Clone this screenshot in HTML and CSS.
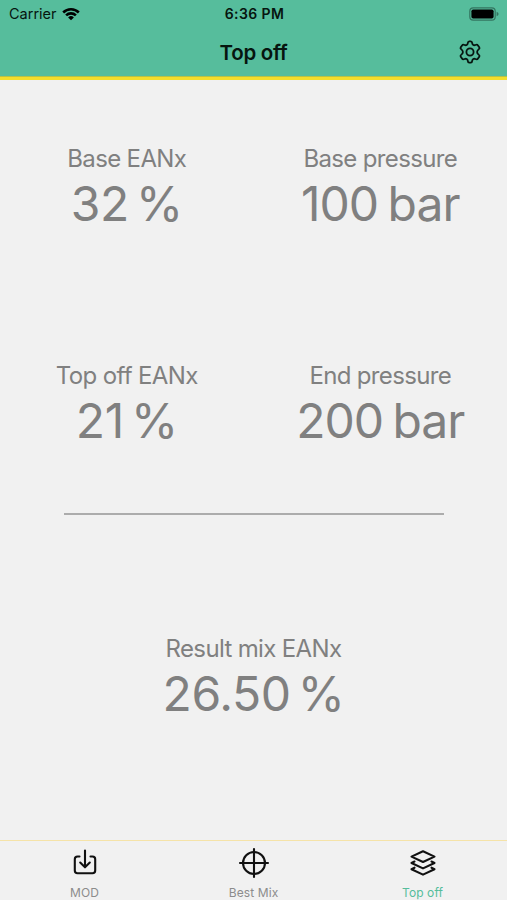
FILE: index.html
```html
<!DOCTYPE html>
<html lang="en">
<head>
    <meta charset="UTF-8">
    <meta name="viewport" content="width=device-width, initial-scale=1.0">
    <title>Top off</title>
    <link rel="stylesheet" href="styles.css">
</head>
<body>

    <header>
        <div class="status-bar">
            <div class="carrier">
                <span>Carrier</span>
                <svg class="wifi" viewBox="0 0 18 14">
                    <path d="M0.3 4.6 A12.3 12.3 0 0 1 17.7 4.6 L15.9 6.4 A9.8 9.8 0 0 0 2.1 6.4 Z"/>
                    <path d="M3.2 7.5 A8.2 8.2 0 0 1 14.8 7.5 L13 9.3 A5.7 5.7 0 0 0 5 9.3 Z"/>
                    <path d="M6.1 10.4 A4.1 4.1 0 0 1 11.9 10.4 L9 13.3 Z"/>
                </svg>
            </div>
            <span class="time">6:36 PM</span>
            <svg class="battery" viewBox="0 0 31 14">
                <rect class="battery-case" x="0.8" y="0.8" width="25.4" height="12.4" rx="3.4"/>
                <rect x="2.4" y="2.4" width="22.2" height="9.2" rx="1.8"/>
                <path class="battery-tip" d="M27.6 4.8 Q29.6 5.5 29.6 7 Q29.6 8.5 27.6 9.2 Z"/>
            </svg>
        </div>
        <div class="title-bar">
            <h1>Top off</h1>
            <svg class="settings" viewBox="0 0 24 24">
                <circle cx="12" cy="12" r="3.6"/>
                <path d="M9.8 3.2 Q10 1.3 11.2 1.3 H12.8 Q14 1.3 14.2 3.2 C14.4 5 15.8 5.7 17.4 5 Q19.2 4.2 19.8 5.2 L21.4 7.4 Q22 8.4 20.4 9.6 C18.7 11 18.7 13 20.4 14.4 Q22 15.6 21.4 16.6 L19.8 18.8 Q19.2 19.8 17.4 19 C15.8 18.3 14.4 19 14.2 20.8 Q14 22.7 12.8 22.7 H11.2 Q10 22.7 9.8 20.8 C9.6 19 8.2 18.3 6.6 19 Q4.8 19.8 4.2 18.8 L2.6 16.6 Q2 15.6 3.6 14.4 C5.3 13 5.3 11 3.6 9.6 Q2 8.4 2.6 7.4 L4.2 5.2 Q4.8 4.2 6.6 5 C8.2 5.7 9.6 5 9.8 3.2 Z"/>
            </svg>
        </div>
    </header>

    <main>
        <div class="inputs">
            <div class="field">
                <div class="label">Base EANx</div>
                <div class="value percent">32 %</div>
            </div>
            <div class="field">
                <div class="label">Base pressure</div>
                <div class="value">100 bar</div>
            </div>
            <div class="field">
                <div class="label">Top off EANx</div>
                <div class="value percent">21 %</div>
            </div>
            <div class="field">
                <div class="label">End pressure</div>
                <div class="value">200 bar</div>
            </div>
        </div>
        <hr>
        <div class="field result">
            <div class="label">Result mix EANx</div>
            <div class="value percent">26.50 %</div>
        </div>
    </main>

    <nav>
        <a class="tab">
            <svg viewBox="0 0 32 32">
                <path d="M10.5 9.5 H8.5 Q5.8 9.5 5.8 12.2 V23.5 Q5.8 26.2 8.5 26.2 H23.5 Q26.2 26.2 26.2 23.5 V12.2 Q26.2 9.5 23.5 9.5 H21.5"/>
                <path d="M16 3.5 V20 M11.2 15.6 L16 20.3 L20.8 15.6"/>
            </svg>
            <span>MOD</span>
        </a>
        <a class="tab">
            <svg viewBox="0 0 32 32">
                <circle cx="16" cy="16" r="11"/>
                <path d="M16 2 V30 M2 16 H30"/>
            </svg>
            <span>Best Mix</span>
        </a>
        <a class="tab active">
            <svg viewBox="0 0 32 32">
                <path d="M16 4.2 L27.5 9.6 L16 15 L4.5 9.6 Z"/>
                <path d="M7.5 14.5 L4.5 16 L16 21.4 L27.5 16 L24.5 14.5"/>
                <path d="M7.5 20.7 L4.5 22.2 L16 27.6 L27.5 22.2 L24.5 20.7"/>
            </svg>
            <span>Top off</span>
        </a>
    </nav>

</body>
</html>
```
FILE: styles.css
```css
* {
    box-sizing: border-box;
}

body {
    font-family: 'Inter', sans-serif;
    margin: 0;
    height: 900px;
    display: flex;
    flex-direction: column;
    background-color: #f1f1f1;
    color: #808080;
}

header {
    height: 80px;
    background-color: #56bd9c;
    border-bottom: 3px solid #f3de2c;
    box-shadow: inset 0 -1px #b9c244;
    color: #06150f;
}

.status-bar {
    display: grid;
    grid-template-columns: 1fr auto 1fr;
    align-items: center;
    height: 27px;
    padding: 0 7px 0 9px;
}

.carrier {
    display: flex;
    align-items: center;
    gap: 5px;
    font-size: 14.5px;
}

.wifi {
    width: 18px;
    height: 14px;
    fill: #000;
}

.time {
    font-size: 14px;
    font-weight: 600;
    letter-spacing: 0.4px;
}

.battery {
    width: 31px;
    height: 14px;
    justify-self: end;
}

.battery-case {
    fill: none;
    stroke: #347560;
    stroke-width: 1.2;
}

.battery-tip {
    fill: #347560;
}

.title-bar {
    display: grid;
    grid-template-columns: 1fr auto 1fr;
    align-items: center;
    height: 50px;
    padding: 0 25px;
}

h1 {
    grid-column: 2;
    margin: 0;
    font-size: 20.5px;
    font-weight: 600;
    letter-spacing: -0.3px;
}

.settings {
    justify-self: end;
    width: 24px;
    height: 24px;
    fill: none;
    stroke: #06150f;
    stroke-width: 1.8;
}

main {
    flex: 1;
    padding-top: 64px;
}

.inputs {
    display: grid;
    grid-template-columns: 1fr 1fr;
    row-gap: 127px;
}

.field {
    text-align: center;
    white-space: nowrap;
}

.label {
    font-size: 24px;
    line-height: 29px;
    letter-spacing: -0.65px;
}

.value {
    font-size: 48px;
    line-height: 61px;
    letter-spacing: -1px;
    word-spacing: -3px;
}

.percent {
    letter-spacing: -0.4px;
    word-spacing: -6px;
}

hr {
    width: 380px;
    height: 2px;
    margin: 62px auto 0;
    border: none;
    background-color: #acacac;
}

.result {
    margin-top: 119px;
}

nav {
    display: flex;
    height: 60px;
    border-top: 1px solid #f5e3a8;
}

.tab {
    flex: 1;
    display: flex;
    flex-direction: column;
    align-items: center;
    padding-top: 6px;
    font-size: 12px;
    color: #8c8c8c;
}

.tab svg {
    width: 32px;
    height: 32px;
    fill: none;
    stroke: #111;
    stroke-width: 2.1;
    stroke-linecap: round;
    stroke-linejoin: round;
}

.tab span {
    margin-top: 6px;
    line-height: 15px;
    letter-spacing: 0.1px;
}

.tab.active {
    color: #56bd9c;
}
```
